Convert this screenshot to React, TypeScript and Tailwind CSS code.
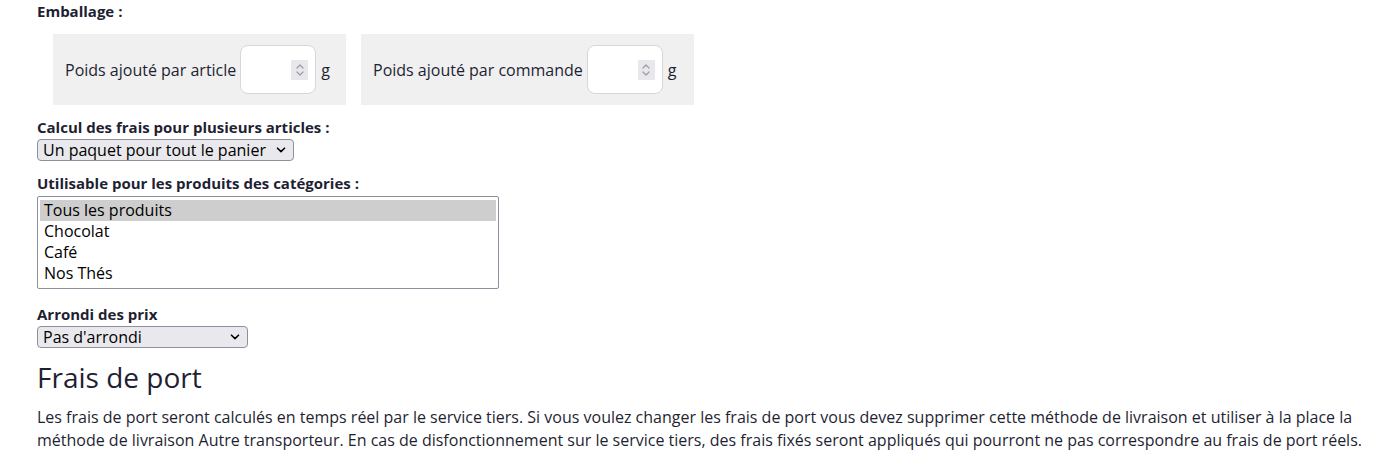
import React from 'react'

const font = { fontFamily: '"Open Sans", "Liberation Sans", Arial, sans-serif' }

function Chevron({ className = '' }: { className?: string }) {
  return (
    <svg viewBox="0 0 10 6" className={className} fill="none" stroke="currentColor" strokeWidth="1.6" strokeLinecap="round" strokeLinejoin="round">
      <path d="M1.5 1.2 5 4.6 8.5 1.2" />
    </svg>
  )
}

function NumberField({ label }: { label: string }) {
  return (
    <div className="flex items-center bg-[#f0f0f0] h-[71px] pl-3 pr-[11px]">
      <span className="text-[16px] mr-1">{label}</span>
      <div className="flex items-center justify-end w-[76px] h-[49px] bg-white border border-[#d6d6e0] rounded-lg pr-[7px]">
        <div className="flex flex-col items-center justify-center w-[17px] h-[20px] bg-[#e8e8ec] text-[#9a9aa8]">
          <svg viewBox="0 0 10 16" className="w-[10px] h-[16px]" fill="none" stroke="currentColor" strokeWidth="1.2" strokeLinecap="round" strokeLinejoin="round">
            <path d="M2 6 5 3 8 6" />
            <path d="M2 10 5 13 8 10" />
          </svg>
        </div>
      </div>
      <span className="text-[16px] ml-[5px]">g</span>
    </div>
  )
}

function Select({ value, width }: { value: string; width: string }) {
  return (
    <div className={`flex items-center justify-between h-[22px] ${width} bg-[#e9e9ed] border border-[#8f8f9d] rounded-[4px] pl-[5px] pr-[7px] text-[16px] text-black`}>
      <span className="leading-none">{value}</span>
      <Chevron className="w-[10px] h-[6px] text-black" />
    </div>
  )
}

export default function App() {
  const categories = ['Tous les produits', 'Chocolat', 'Café', 'Nos Thés']
  return (
    <div style={font} className="bg-white text-[#1f1f33] w-[1379px] h-[454px] overflow-hidden px-[37px]">
      <div className="text-[15px] font-bold leading-[22px]">Emballage :</div>

      <div className="flex gap-[15px] ml-4 mt-3">
        <div className="w-[293px]"><NumberField label="Poids ajouté par article" /></div>
        <div className="w-[333px]"><NumberField label="Poids ajouté par commande" /></div>
      </div>

      <div className="text-[15px] font-bold leading-[20px] mt-[12px]">Calcul des frais pour plusieurs articles :</div>
      <div className="mt-[2px]">
        <Select value="Un paquet pour tout le panier" width="w-[257px]" />
      </div>

      <div className="text-[15px] font-bold leading-[20px] mt-[12px]">Utilisable pour les produits des catégories :</div>
      <div className="mt-[3px] w-[462px] h-[93px] border border-[#8f8f9d] rounded-[2px] px-[2px] pt-[3px] text-[16px] text-black">
        {categories.map((c, i) => (
          <div key={c} className={`h-[21px] leading-[21px] px-1 ${i === 0 ? 'bg-[#cecece]' : ''}`}>
            {c}
          </div>
        ))}
      </div>

      <div className="text-[15px] font-bold leading-[20px] mt-[15px]">Arrondi des prix</div>
      <div className="mt-[2px]">
        <Select value="Pas d'arrondi" width="w-[211px]" />
      </div>

      <h2 className="text-[28px] leading-[34px] mt-[12px]">Frais de port</h2>

      <p className="text-[16px] leading-[23px] mt-[12px] w-[1330px]">
        Les frais de port seront calculés en temps réel par le service tiers. Si vous voulez changer les frais de port vous devez supprimer cette méthode de livraison et utiliser à la place la méthode de livraison Autre transporteur. En cas de disfonctionnement sur le service tiers, des frais fixés seront appliqués qui pourront ne pas correspondre au frais de port réels.
      </p>
    </div>
  )
}
